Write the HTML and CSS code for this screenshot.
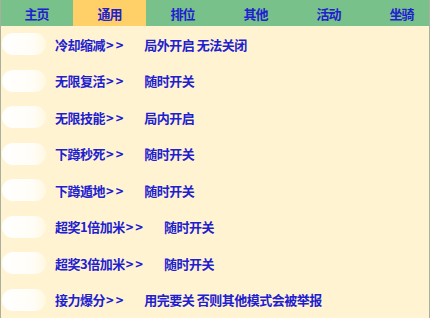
FILE: index.html
```
<!DOCTYPE html>
<html lang="zh">
<head>
<meta charset="utf-8">
<link rel="stylesheet" href="styles.css">
</head>
<body>
<div class="app">
  <nav class="tabs">
    <div class="tab">主页</div>
    <div class="tab active">通用</div>
    <div class="tab">排位</div>
    <div class="tab">其他</div>
    <div class="tab">活动</div>
    <div class="tab">坐骑</div>
  </nav>
  <div class="list">
    <div class="row"><span class="toggle"></span><span class="name">冷却缩减<span class="arrow">&gt;&gt;</span></span><span class="note">局外开启 无法关闭</span></div>
    <div class="row"><span class="toggle"></span><span class="name">无限复活<span class="arrow">&gt;&gt;</span></span><span class="note">随时开关</span></div>
    <div class="row"><span class="toggle"></span><span class="name">无限技能<span class="arrow">&gt;&gt;</span></span><span class="note">局内开启</span></div>
    <div class="row"><span class="toggle"></span><span class="name">下蹲秒死<span class="arrow">&gt;&gt;</span></span><span class="note">随时开关</span></div>
    <div class="row"><span class="toggle"></span><span class="name">下蹲遁地<span class="arrow">&gt;&gt;</span></span><span class="note">随时开关</span></div>
    <div class="row"><span class="toggle"></span><span class="name">超奖1倍加米<span class="arrow">&gt;&gt;</span></span><span class="note">随时开关</span></div>
    <div class="row"><span class="toggle"></span><span class="name">超奖3倍加米<span class="arrow">&gt;&gt;</span></span><span class="note">随时开关</span></div>
    <div class="row"><span class="toggle"></span><span class="name">接力爆分<span class="arrow">&gt;&gt;</span></span><span class="note">用完要关 否则其他模式会被举报</span></div>
  </div>
</div>
</body>
</html>
```
FILE: styles.css
```
html, body {
  margin: 0;
  padding: 0;
  background: #fff3d2;
}
.app {
  width: 430px;
  height: 318px;
  box-sizing: border-box;
  border-left: 1px solid #a8b09c;
  border-right: 1px solid #a8b09c;
  background: #fff3d2;
  overflow: hidden;
  font-family: "Noto Sans CJK SC", "Noto Sans", sans-serif;
  color: #2020d0;
}
.tabs {
  display: flex;
  height: 26px;
  background: #79c18a;
  margin-left: -1px;
  overflow: hidden;
}
.tab {
  flex: 0 0 73px;
  display: flex;
  align-items: center;
  justify-content: center;
  font-size: 13px;
  font-weight: 700;
  letter-spacing: -1px;
  color: #2020d0;
}
.tab.active {
  background: #ffcf68;
}
.list {
  display: flex;
  flex-direction: column;
}
.row {
  height: 36.5px;
  display: flex;
  align-items: center;
  font-size: 13px;
  font-weight: 700;
}
.toggle {
  width: 44px;
  height: 22px;
  margin-left: 1px;
  margin-right: 9px;
  border-radius: 11px;
  background: linear-gradient(90deg, #ffffff 0%, #fffdf6 70%, #fff8e2 100%);
  flex: 0 0 auto;
}
.name {
  letter-spacing: -0.5px;
}
.arrow {
  letter-spacing: 2px;
  margin-left: 1px;
}
.note {
  margin-left: 19px;
  letter-spacing: -0.5px;
}
```
